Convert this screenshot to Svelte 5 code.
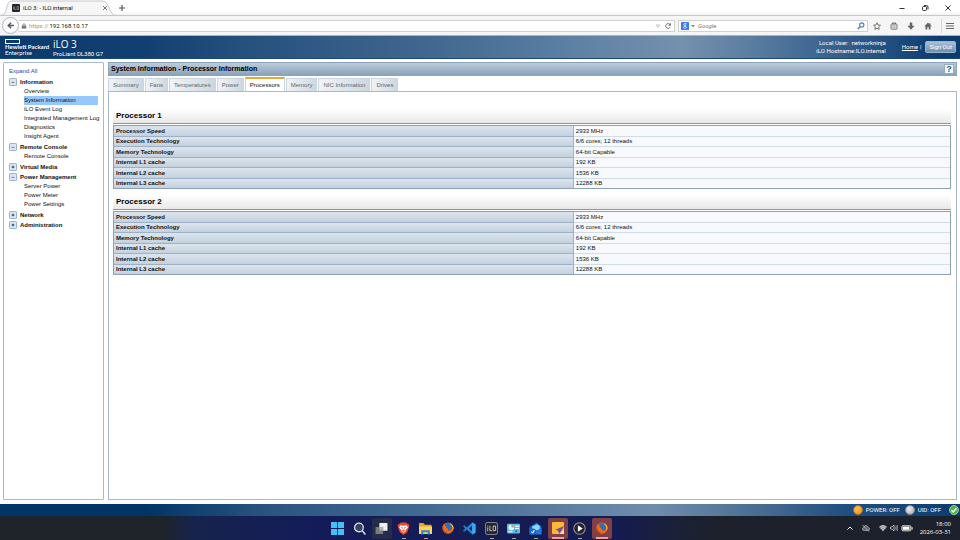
<script lang="ts">
  type TreeGroup = { label: string; open: boolean; items: string[] }

  const tree: TreeGroup[] = [
    {
      label: 'Information',
      open: true,
      items: ['Overview', 'System Information', 'iLO Event Log', 'Integrated Management Log', 'Diagnostics', 'Insight Agent'],
    },
    { label: 'Remote Console', open: true, items: ['Remote Console'] },
    { label: 'Virtual Media', open: false, items: [] },
    { label: 'Power Management', open: true, items: ['Server Power', 'Power Meter', 'Power Settings'] },
    { label: 'Network', open: false, items: [] },
    { label: 'Administration', open: false, items: [] },
  ]

  const tabs = ['Summary', 'Fans', 'Temperatures', 'Power', 'Processors', 'Memory', 'NIC Information', 'Drives']

  const specs = [
    ['Processor Speed', '2933 MHz'],
    ['Execution Technology', '6/6 cores; 12 threads'],
    ['Memory Technology', '64-bit Capable'],
    ['Internal L1 cache', '192 KB'],
    ['Internal L2 cache', '1536 KB'],
    ['Internal L3 cache', '12288 KB'],
  ]

  const processors = [
    { name: 'Processor 1', specs },
    { name: 'Processor 2', specs },
  ]

  let activeItem = $state('System Information')
  let activeTab = $state('Processors')
  let address = $state('192.168.10.17')
  let query = $state('')
</script>

{#snippet firefox()}
  <svg viewBox="0 0 24 24" class="app-icon small">
    <circle cx="12" cy="12" r="11" fill="#e8641b" />
    <circle cx="13" cy="10" r="8" fill="#2f6fb8" />
    <path d="M12 2c5-1 10 3 11 9 0 7-5 12-11 12C5 23 1 18 1 12c0-3 1-6 3-8l1 4 4 0c-2 2-2 3 0 4l3 1c-2 3 1 5 4 4 4-1 6-6 3-10-1-2-4-4-7-5z" fill="#ee6a1c" />
    <path d="M17 5c4 3 5 7 4 11 2-1 2-4 2-5-1-4-3-6-6-8z" fill="#fbc531" />
    <path d="M2 9c0 7 4 12 10 13C5 23 1 18 1 12z" fill="#c8321c" />
  </svg>
{/snippet}

<div class="desktop">
  <header class="tab-strip">
    <div class="browser-tab">
      <svg class="tab-shape" viewBox="0 0 120 16" preserveAspectRatio="none" aria-hidden="true">
        <path d="M0 15.500C8 15 4 1 11 1h94c8 0 6 14 14 14.500z" fill="#f6f6f7" stroke="#c4c7cc" />
      </svg>
      <div class="tab-content">
        <svg class="favicon" viewBox="0 0 16 16" aria-hidden="true">
          <rect width="16" height="16" rx="2" fill="#25272b" />
          <path d="M3 5v6M5.500 5v6h3M10 5h3v6h-3z" fill="none" stroke="#bfc3c8" />
        </svg>
        <span class="tab-title">iLO 3: - ILO.internal</span>
        <button class="bare tab-close" aria-label="Close tab">
          <svg viewBox="0 0 8 8"><path d="M2 2l4 4m0-4l-4 4" stroke="#777" /></svg>
        </button>
      </div>
    </div>
    <button class="bare new-tab" aria-label="New tab">
      <svg viewBox="0 0 8 8"><path d="M4 1v6M1 4h6" stroke="#555" stroke-width="1.200" /></svg>
    </button>
    <div class="window-controls">
      <button class="bare" aria-label="Minimize">
        <svg viewBox="0 0 8 8"><path d="M1.500 4.500h5" stroke="#333" /></svg>
      </button>
      <button class="bare" aria-label="Restore">
        <svg viewBox="0 0 8 8"><rect x="1.500" y="2.500" width="4" height="4" rx="1" fill="none" stroke="#333" /><path d="M3 1.500h2.500q1.500 0 1.500 1.500v2.500" fill="none" stroke="#333" /></svg>
      </button>
      <button class="bare" aria-label="Close window">
        <svg viewBox="0 0 8 8"><path d="M1.500 1.500l5 5m0-5l-5 5" stroke="#333" /></svg>
      </button>
    </div>
  </header>

  <div class="toolbar">
    <button class="bare back" aria-label="Back">
      <svg viewBox="0 0 16 16"><path d="M14 8H4m5-5L4 8l5 5" fill="none" stroke="#555a60" stroke-width="2.600" /></svg>
    </button>
    <div class="field url">
      <svg class="lock" viewBox="0 0 8 8" aria-hidden="true">
        <rect x="1" y="3.500" width="6" height="4" fill="#777" /><path d="M2.500 4V2.500a1.500 1.500 0 013 0V4" fill="none" stroke="#777" />
      </svg>
      <label for="address">https://</label>
      <input id="address" bind:value={address} />
      <svg class="drop" viewBox="0 0 8 8" aria-hidden="true"><path d="M1.500 2.500h5L4 6z" fill="#fff" stroke="#b5b5b5" /></svg>
      <button class="bare reload" aria-label="Reload">
        <svg viewBox="0 0 8 8"><path d="M6 2.500A2.400 2.400 0 106.300 5" fill="none" stroke="#777" /><path d="M7 .8v3H4z" fill="#777" /></svg>
      </button>
    </div>
    <div class="field search">
      <svg class="engine" viewBox="0 0 16 16" aria-hidden="true">
        <rect width="16" height="16" rx="1" fill="#3f7ee8" />
        <path d="M11 3H8a2.300 2.300 0 100 4.600c2 0 2-3 0-4.600M8 7.600c-1 1 3 1.500 3 3.400s-6 2.500-6 0 4-2 5-1.800" fill="none" stroke="#fff" stroke-width="1.300" />
      </svg>
      <svg class="engine-drop" viewBox="0 0 4 4" aria-hidden="true"><path d="M0 1h4L2 3.500z" fill="#888" /></svg>
      <input aria-label="Search" placeholder="Google" bind:value={query} />
      <button class="bare" aria-label="Search the web">
        <svg viewBox="0 0 8 8"><circle cx="4.800" cy="3" r="2.100" fill="none" stroke="#4a80bd" stroke-width="1.100" /><path d="M3.300 4.500L.8 7" stroke="#4a80bd" stroke-width="1.500" /></svg>
      </button>
    </div>
    <div class="tools">
      <button class="bare" aria-label="Bookmark">
        <svg viewBox="0 0 16 16"><path d="M8 1.500l2 4.500 5 .5-3.700 3.300 1 5L8 12.300l-4.300 2.500 1-5L1 6.500 6 6z" fill="none" stroke="#666" stroke-width="1.800" /></svg>
      </button>
      <button class="bare" aria-label="Bookmarks list">
        <svg viewBox="0 0 16 16"><rect x="2" y="4" width="12" height="10.500" rx="1.500" fill="#ddd" stroke="#666" stroke-width="1.600" /><path d="M5 4V2h6v2" fill="none" stroke="#666" stroke-width="2" /><path d="M5 7.500h6M5 10.500h6" stroke="#888" /></svg>
      </button>
      <button class="bare" aria-label="Downloads">
        <svg viewBox="0 0 16 16"><path d="M5.500 1h5v6.500H15l-7 8-7-8h4.500z" fill="#666" /></svg>
      </button>
      <button class="bare" aria-label="Home page">
        <svg viewBox="0 0 16 16"><path d="M8 1L.5 8.500H3V15h3.500v-4.500h3V15H13V8.500h2.500L13 6V2.500h-2V4z" fill="#666" /></svg>
      </button>
      <button class="bare menu" aria-label="Menu">
        <svg viewBox="0 0 16 16"><path d="M0 3h16M0 8h16M0 13h16" stroke="#666" stroke-width="2.200" /></svg>
      </button>
    </div>
  </div>

  <div class="banner">
    <div class="logo">
      <svg viewBox="0 0 15 5" aria-hidden="true"><rect x=".5" y=".5" width="14" height="4" fill="none" stroke="#fff" /></svg>
      <strong>Hewlett Packard</strong>
      <span>Enterprise</span>
    </div>
    <div class="product">
      <h1>iLO 3</h1>
      <p>ProLiant DL380 G7</p>
    </div>
    <div class="session">
      <p>Local User:&nbsp; networkninja</p>
      <p>iLO Hostname:ILO.internal</p>
    </div>
    <a class="home" href="#home">Home</a>
    <span class="divider">|</span>
    <button class="sign-out">Sign Out</button>
  </div>

  <div class="workspace">
    <nav class="sidebar">
      <a class="expand" href="#expand">Expand All</a>
      {#each tree as group (group.label)}
        <button class="bare group" aria-expanded={group.open}>
          <svg viewBox="0 0 9 9" aria-hidden="true">
            <rect x=".5" y=".5" width="8" height="8" rx="1" fill="#dce6f1" stroke="#8ba6c5" />
            {#if group.open}
              <path d="M3 5h3" stroke="#4f6f96" />
            {:else}
              <path d="M3 4.500h3M4.500 3v3" stroke="#1f4a7d" stroke-width="1.300" />
            {/if}
          </svg>
          {group.label}
        </button>
        {#if group.open}
          <ul>
            {#each group.items as item (item)}
              <li><a href="#{item}" class:active={item === activeItem} onclick={() => (activeItem = item)}>{item}</a></li>
            {/each}
          </ul>
        {/if}
      {/each}
    </nav>

    <main>
      <div class="title-bar">
        <h2>System Information - Processor Information</h2>
        <button class="help" aria-label="Help">?</button>
      </div>
      <div class="tabs" role="tablist">
        {#each tabs as tab (tab)}
          <button role="tab" aria-selected={tab === activeTab} class:active={tab === activeTab} onclick={() => (activeTab = tab)}>{tab}</button>
        {/each}
      </div>
      <div class="panel">
        {#each processors as processor (processor.name)}
          <section>
            <h3>{processor.name}</h3>
            <table>
              <tbody>
                {#each processor.specs as [label, value] (label)}
                  <tr><th scope="row">{label}</th><td>{value}</td></tr>
                {/each}
              </tbody>
            </table>
          </section>
        {/each}
      </div>
    </main>
  </div>

  <footer class="status">
    <span class="orb amber"></span>
    <span class="power">POWER: OFF</span>
    <span class="orb"></span>
    <span class="uid">UID: OFF</span>
    <svg viewBox="0 0 20 20" aria-label="Health OK">
      <circle cx="10" cy="10" r="9" fill="#52b34c" stroke="#b7dfb2" stroke-width="1.500" />
      <path d="M5 10.500l3.500 3.500L15 6.500" fill="none" stroke="#fff" stroke-width="2.800" />
    </svg>
  </footer>

  <div class="taskbar">
    <div class="apps">
      <button class="bare" aria-label="Start">
        <svg class="app-icon" viewBox="0 0 24 24"><path d="M0 0h11.300v11.300H0zM12.700 0H24v11.300H12.700zM0 12.700h11.300V24H0zM12.700 12.700H24V24H12.700z" fill="#45bff5" /></svg>
      </button>
      <button class="bare" aria-label="Search">
        <svg class="app-icon" viewBox="0 0 24 24"><circle cx="11" cy="10" r="8" fill="#36415f" stroke="#dfe3ea" stroke-width="2.400" /><path d="M17 16l6 7" stroke="#dfe3ea" stroke-width="2.800" /></svg>
      </button>
      <button class="bare hover" aria-label="Task view">
        <svg class="app-icon" viewBox="0 0 24 24"><rect x="8" y="2" width="15" height="14" rx="1" fill="#f1f1f1" /><rect x="1" y="9" width="14" height="13" rx="1" fill="#777b80" /><path d="M8 9h7v7H8z" fill="#aeb1b5" /></svg>
      </button>
      <button class="bare running" aria-label="Brave">
        <svg class="app-icon" viewBox="0 0 24 24"><path d="M7 1h10l2 2 2 0 2 4-1 3-3 9-7 5-7-5L2 10 1 7l2-4 2 0z" fill="#f0462a" /><path d="M6 6l6 1 6-1 2 4-4 5 0 2-4 3-4-3 0-2-4-5z" fill="#fff" /><path d="M7 9l4 1-1 3zM17 9l-4 1 1 3zM9 16l3-2 3 2-3 2z" fill="#f0462a" /></svg>
      </button>
      <button class="bare running" aria-label="File Explorer">
        <svg class="app-icon" viewBox="0 0 24 24"><path d="M0 2h8l3 3h12v17H0z" fill="#e9a31c" /><path d="M0 8h24v14H0z" fill="#fdd35b" /><path d="M4 15h16v8h-4v-4H8v4H4z" fill="#2989d8" /></svg>
      </button>
      <button class="bare" aria-label="Firefox">{@render firefox()}</button>
      <button class="bare" aria-label="Visual Studio Code">
        <svg class="app-icon" viewBox="0 0 24 24"><path d="M17 1l6 3v16l-6 3L7 14l-5 4-2-2 4-4-4-4 2-2 5 4zM17 7l-6 5 6 5z" fill="#2187d0" fill-rule="evenodd" /><path d="M17 1l6 3v16l-6 3z" fill="#40a9f0" /></svg>
      </button>
      <button class="bare running" aria-label="iLO">
        <svg class="app-icon" viewBox="0 0 24 24"><rect x="1" y="1" width="22" height="22" rx="3" fill="#24272b" stroke="#9b9ea3" stroke-width="1.500" /><path d="M5 10v7M5 7v1.500M9 7v9h4M15 7.500h4.500v8.500H15z" fill="none" stroke="#ddd" stroke-width="1.500" /></svg>
      </button>
      <button class="bare running" aria-label="Control Panel">
        <svg class="app-icon" viewBox="0 0 24 24"><rect x="0" y="3" width="24" height="18" rx="2" fill="#62bbea" /><circle cx="8" cy="10" r="5" fill="#fff" /><path d="M8 10V5a5 5 0 015 5z" fill="#e6913b" /><path d="M15 8h7M15 12h7M3 18h7" stroke="#fff" stroke-width="2" /><circle cx="17" cy="17" r="2" fill="#216ead" /></svg>
      </button>
      <button class="bare running" aria-label="Mail">
        <svg class="app-icon" viewBox="0 0 24 24"><path d="M1 9L14 1l9 7v13H1z" fill="#1864c7" /><path d="M6 8l9-4 5 4v7H6z" fill="#8ad8fa" /><path d="M1 11l12 6 10-7v13H1z" fill="#2478dd" /><circle cx="7" cy="18" r="6" fill="#1264ce" /><path d="M4 18l3 2 3-5" fill="none" stroke="#fff" stroke-width="2" /></svg>
      </button>
      <button class="bare alert" aria-label="Sticky Notes">
        <svg class="app-icon small" viewBox="0 0 24 24"><rect width="24" height="24" rx="2" fill="#fbb934" /><path d="M24 8L6 16l6 1 3 7z" fill="#7446b1" /><path d="M15 24l9-9v9z" fill="#f5e2b2" /></svg>
      </button>
      <button class="bare running" aria-label="Media Player">
        <svg class="app-icon" viewBox="0 0 24 24"><circle cx="12" cy="12" r="10.500" fill="#22242d" stroke="#a98f8f" stroke-width="2" /><path d="M9 6l9 6-9 6z" fill="#fff" /></svg>
      </button>
      <button class="bare alert" aria-label="Firefox window">{@render firefox()}</button>
    </div>
    <div class="tray">
      <svg viewBox="0 0 16 16"><path d="M3 11l5-5 5 5" fill="none" stroke="#fff" stroke-width="2" /></svg>
      <svg class="cloud" viewBox="0 0 16 16"><path d="M4 13a3 3 0 010-6 4 4 0 018 0 3 3 0 010 6z" fill="#5a5e65" stroke="#a3a7ad" stroke-width="1.600" /><path d="M1 2l13 13" stroke="#c3c6ca" stroke-width="1.600" /></svg>
      <svg viewBox="0 0 16 16"><path d="M0 6q8-8 16 0L8 15z" fill="#777c82" /><path d="M1 6q7-6 14 0M3.500 9q4.500-4 9 0M6 12q2-2 4 0" fill="none" stroke="#fff" stroke-width="1.500" /></svg>
      <svg viewBox="0 0 16 16"><path d="M1 6h3l4-4v12l-4-4H1z" fill="none" stroke="#ddd" stroke-width="1.400" /><path d="M10 5q2 3 0 6M12 3q4 5 0 10M14.500 2q3 6 0 12" fill="none" stroke="#ddd" /></svg>
      <svg class="battery" viewBox="0 0 20 14"><rect x="1" y="3" width="16" height="9" rx="2" fill="#777" stroke="#ddd" stroke-width="1.500" /><path d="M3 5h11v5H3z" fill="#fff" /><path d="M19 5.500v4" stroke="#ddd" stroke-width="2" /></svg>
      <div class="clock">
        <time>18:00</time>
        <time>2026-03-31</time>
      </div>
    </div>
  </div>
</div>

<style>
  :global(body) {
    background: #fff;
  }

  .desktop {
    display: flex;
    flex-direction: column;
    min-height: 100vh;
    font: 6px/8px 'Liberation Sans', Arial, sans-serif;
    color: #111;
  }

  .desktop * {
    box-sizing: border-box;
  }

  h1, h2, h3, p, ul {
    margin: 0;
    padding: 0;
  }

  button, input {
    font: inherit;
    color: inherit;
  }

  svg {
    display: block;
    flex-shrink: 0;
    width: 8px;
    height: 8px;
  }

  .bare {
    display: flex;
    align-items: center;
    justify-content: center;
    padding: 0;
    border: 0;
    background: none;
  }

  /* browser window */
  .tab-strip {
    display: flex;
    align-items: center;
    height: 16px;
    padding: 0 8px 0 1px;
    background: linear-gradient(#fff 80%, #f0f0f2);
    border-bottom: 1px solid #c6c8cd;
    font-family: Roboto, sans-serif;
  }

  .browser-tab {
    display: grid;
    width: 116px;
    height: 16px;
  }

  .tab-shape, .tab-content {
    grid-area: 1 / 1;
  }

  .tab-shape {
    width: 100%;
    height: 16px;
  }

  .tab-content {
    display: flex;
    align-items: center;
    gap: 3px;
    padding: 0 8px 0 11px;
  }

  .tab-title {
    flex: 1;
    white-space: nowrap;
  }

  .new-tab {
    margin-left: 1px;
  }

  .window-controls {
    display: flex;
    gap: 15px;
    margin-left: auto;
  }

  .toolbar {
    display: flex;
    align-items: center;
    height: 20px;
    padding: 0 6px 0 2px;
    background: #f5f5f6;
    border-bottom: 1px solid #aab4bf;
    font-family: Roboto, sans-serif;
  }

  .back {
    width: 17px;
    height: 17px;
    border: 1px solid #b4b6ba;
    border-radius: 50%;
    background: #fbfbfb;
  }

  .back svg {
    width: 9px;
    height: 9px;
  }

  .field {
    display: flex;
    align-items: center;
    height: 12px;
    border: 1px solid #cfd1d5;
    background: #fff;
  }

  .url {
    flex: 1;
    gap: 1px;
    padding: 0 2px;
    border-left: 0;
  }

  .lock {
    width: 6px;
    height: 6px;
    margin-right: 1px;
  }

  .url label {
    color: #999;
  }

  .field input {
    flex: 1;
    min-width: 0;
    padding: 0;
    border: 0;
    outline: 0;
    background: none;
  }

  .drop {
    width: 6px;
    height: 6px;
    margin-right: 2px;
  }

  .search {
    flex: 0 1 190px;
    gap: 2px;
    margin-left: 3px;
    padding: 0 2px;
  }

  .engine-drop {
    width: 4px;
    height: 4px;
    margin-right: 1px;
  }

  .search input::placeholder {
    color: #777;
    font-style: italic;
    opacity: 1;
  }

  .tools {
    display: flex;
    align-items: center;
    gap: 9px;
    padding-left: 5px;
  }

  .menu {
    height: 14px;
    padding-left: 4px;
    border-left: 1px solid #d5d6d8;
  }

  /* iLO banner */
  .banner {
    display: flex;
    align-items: center;
    height: 23px;
    padding: 0 4px 0 5px;
    background: linear-gradient(90deg, #0a3a6d 0%, #123f72 15%, #24507d 25%, #41688f 45%, #5a7ea2 58%, #7491ad 71%, #5b7ea1 78%, #2b5787 90%, #0b3c70 98%);
    border-bottom: 1px solid #1d4775;
    color: #fff;
    font-family: Roboto, sans-serif;
  }

  .logo {
    width: 48px;
    font-family: Lato, sans-serif;
    line-height: 6px;
  }

  .logo svg {
    width: 15px;
    height: 5px;
  }

  .logo strong, .logo span {
    display: block;
    white-space: nowrap;
  }

  .product {
    flex: 1;
    line-height: 7px;
  }

  h1 {
    font-family: 'Open Sans', sans-serif;
    font-size: 10px;
    font-weight: 400;
    line-height: 12px;
  }

  .session {
    margin-right: 16px;
    text-align: right;
  }

  .home {
    color: #fff;
  }

  .divider {
    margin: 0 4px 0 2px;
  }

  .sign-out {
    height: 12px;
    padding: 0 3px;
    border: 1px solid #9db4cc;
    border-radius: 2px;
    background: linear-gradient(#a9bfd3, #6d90b2);
    color: #fff;
    line-height: 8px;
  }

  .workspace {
    display: flex;
    flex: 1;
    gap: 4px;
    padding: 3px 3px 4px;
  }

  .sidebar {
    flex: 0 0 101px;
    min-width: 0;
    padding: 4px 5px;
    border: 1px solid #a9b9d0;
    border-radius: 1px;
  }

  .expand {
    display: block;
    height: 10px;
    color: #2446b8;
    text-decoration: none;
  }

  .group {
    gap: 3px;
    height: 10px;
    font-weight: 700;
    color: #111;
  }

  ul {
    padding: 0 0 1px 15px;
    list-style: none;
  }

  li a {
    display: block;
    height: 9px;
    line-height: 9px;
    white-space: nowrap;
    color: #111;
    text-decoration: none;
  }

  li a.active {
    background: #96c8fb;
  }

  main {
    display: flex;
    flex: 1;
    flex-direction: column;
    min-width: 0;
  }

  .title-bar {
    display: flex;
    align-items: center;
    justify-content: space-between;
    height: 14px;
    padding: 0 2px;
    border: 1px solid #8fa3b8;
    background: linear-gradient(#bccbd9, #8aa3ba);
    color: #000;
  }

  h2 {
    font-size: 7px;
  }

  .help {
    width: 10px;
    height: 10px;
    padding: 0;
    border: 1px solid #9aaabd;
    background: #f4f7fa;
    color: #205d94;
    font-size: 9px;
    font-weight: 700;
    line-height: 8px;
  }

  .tabs {
    display: flex;
    gap: 1px;
    padding-top: 2px;
  }

  .tabs button {
    height: 13px;
    padding: 0 4px;
    border: 1px solid #cbd5e0;
    border-bottom: 0;
    background: linear-gradient(100deg, #f1f4f7, #cbd6e1);
    color: #666;
    white-space: nowrap;
  }

  .tabs button.active {
    height: 15px;
    margin: -1px 0 -1px;
    padding-bottom: 1px;
    border-top: 2px solid #e5a83a;
    background: #fff;
    color: #111;
  }

  .panel {
    flex: 1;
    padding: 17px 5px 5px 4px;
    border: 1px solid #a9b9d0;
  }

  section {
    margin-bottom: 6px;
  }

  h3 {
    height: 15px;
    margin-bottom: 1px;
    padding-left: 3px;
    border-bottom: 1px solid #7f97b2;
    background: linear-gradient(#fff, #e8e8e8);
    color: #000;
    font-size: 8px;
    line-height: 14px;
  }

  table {
    width: 100%;
    height: 64px;
    border: 1px solid #8ba0bb;
    border-spacing: 0;
    text-align: left;
  }

  th, td {
    padding: 0 2px;
    border-bottom: 1px solid #d2dce5;
    background: #f7f9fc;
  }

  th {
    width: 55%;
    border-right: 1px solid #9fb1c6;
    border-bottom-color: #9db1c6;
    background: linear-gradient(#dce5ee, #c4d1de);
  }

  tr:last-child > * {
    border-bottom: 0;
  }

  .status {
    display: flex;
    align-items: center;
    height: 12px;
    padding-right: 1px;
    background: linear-gradient(90deg, #003466 0%, #003466 15%, #2a5580 28%, #446c93 45%, #6f8dab 68%, #547799 76%, #214f80 88%, #0b3c70 100%);
    color: #fff;
    font-family: Roboto, sans-serif;
  }

  .orb {
    width: 10px;
    height: 10px;
    border: 1px solid #8e8e8e;
    border-radius: 50%;
    background: radial-gradient(circle at 40% 35%, #eee, #a5a5a5);
  }

  .orb.amber {
    margin-left: auto;
    border-color: #b87a1f;
    background: radial-gradient(circle at 40% 35%, #ffc15a, #e98c0b);
  }

  .power {
    margin: 0 5px 0 3px;
  }

  .uid {
    margin: 0 8px 0 3px;
  }

  .status svg {
    width: 10px;
    height: 10px;
  }

  /* Windows taskbar */
  .taskbar {
    display: grid;
    grid-template-columns: 1fr auto 1fr;
    height: 24px;
    background: linear-gradient(90deg, #1e242a 0%, #1e242a 17%, #16244c 20%, #141b5a 33%, #151c52 50%, #141b50 64%, #1a2038 70%, #1d212b 75%, #1d212b 100%);
    color: #fff;
    font-family: 'Open Sans', sans-serif;
  }

  .apps {
    display: flex;
    grid-column: 2;
    align-items: center;
    gap: 2px;
    margin-right: 21px;
  }

  .apps button {
    width: 20px;
    height: 21px;
    border-radius: 2px;
  }

  .app-icon {
    width: 13px;
    height: 13px;
  }

  .app-icon.small {
    width: 12px;
    height: 12px;
  }

  .apps .hover {
    background: #252c4a;
  }

  .apps .running {
    background: linear-gradient(#a6a9b0, #a6a9b0) bottom / 4px 1px no-repeat;
  }

  .apps .alert {
    background: linear-gradient(#f0a0a0, #f0a0a0) bottom / 12px 2px no-repeat #7f4048;
  }

  .tray {
    display: flex;
    align-items: center;
    justify-content: flex-end;
    gap: 3px;
    padding-right: 9px;
  }

  .cloud {
    margin: 0 6px 0 5px;
  }

  .battery {
    width: 12px;
    margin-right: 4px;
  }

  .clock {
    text-align: right;
  }

  .clock time {
    display: block;
  }
</style>
